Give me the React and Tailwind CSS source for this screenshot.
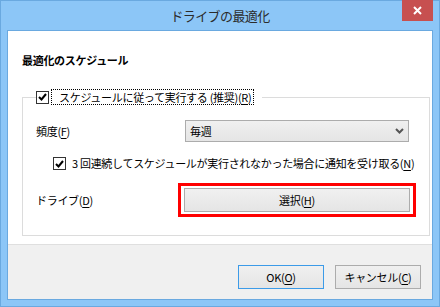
import React from 'react';

const font = "font-['Noto_Sans_CJK_JP','Noto_Sans',sans-serif]";

const CheckBox = () => (
  <span className="w-[13px] h-[13px] border border-[#333333] bg-white flex items-center justify-center shrink-0">
    <svg width="9" height="8" viewBox="0 0 9 8">
      <polyline points="1,4 3.5,6.5 8,1" fill="none" stroke="#000" strokeWidth="2" />
    </svg>
  </span>
);

const Key = ({ children }) => <span className="underline underline-offset-2">{children}</span>;

const App = () => (
  <div className={`w-[440px] h-[307px] bg-[#8CC6F7] border border-[#6AA9E0] flex flex-col ${font}`}>
    <div className="relative h-[29px] flex items-center justify-center text-[13px] tracking-[-0.6px] text-[#2b2b2b]">
      ドライブの最適化
      <div className="absolute right-[6px] top-[-1px] w-[31px] h-[21px] bg-[#C75050] flex items-center justify-center">
        <svg width="9" height="9" viewBox="0 0 9 9">
          <path d="M1 1 L8 8 M8 1 L1 8" stroke="#fff" strokeWidth="2" />
        </svg>
      </div>
    </div>

    <div className="mx-[6px] mb-[6px] flex-1 border border-[#6AA9E0] flex flex-col text-[11px] tracking-[-0.3px] text-black whitespace-nowrap">
      <div className="h-[214px] bg-white border-b border-[#DFDFDF] pl-[14px] pt-[21px]">
        <div className="h-[16px] leading-[16px] font-bold">最適化のスケジュール</div>

        <fieldset className="mt-[21px] w-[399px] border border-[#DCDCDC] px-[13px] pb-[18px]">
          <legend className="pr-[8px]">
            <div className="flex items-center gap-[2px] h-[16px]">
              <CheckBox />
              <span className="h-[16px] leading-[14px] border border-dotted border-black pl-[7px] pr-[2px]">
                スケジュールに従って実行する (推奨)(<Key>R</Key>)
              </span>
            </div>
          </legend>

          <div className="mt-[15px] flex items-center">
            <div className="w-[149px]">
              頻度(<Key>F</Key>)
            </div>
            <div className="w-[224px] h-[22px] border border-[#ACACAC] bg-gradient-to-b from-[#F0F0F0] to-[#E5E5E5] flex items-center justify-between pl-[4px] pr-[4px]">
              <span>毎週</span>
              <svg width="9" height="6" viewBox="0 0 9 6">
                <polyline points="1,1 4.5,4.5 8,1" fill="none" stroke="#555" strokeWidth="2" />
              </svg>
            </div>
          </div>

          <div className="mt-[13px] h-[17px] flex items-center pl-[17px] gap-[6px]">
            <CheckBox />
            <span>
              3&nbsp;回連続してスケジュールが実行されなかった場合に通知を受け取る(<Key>N</Key>)
            </span>
          </div>

          <div className="mt-[11px] flex items-center">
            <div className="w-[142px]">
              ドライブ(<Key>D</Key>)
            </div>
            <div className="border-[3px] border-[#FF0000] px-[3px] py-[2px]">
              <div className="w-[226px] h-[24px] border border-[#ACACAC] bg-gradient-to-b from-[#F0F0F0] to-[#E5E5E5] flex items-center justify-center">
                選択(<Key>H</Key>)
              </div>
            </div>
          </div>
        </fieldset>
      </div>

      <div className="flex-1 bg-[#F0F0F0] flex justify-end items-start pt-[20px] pr-[11px] gap-[11px]">
        <div className="w-[86px] h-[24px] border border-[#3C9BE8] bg-gradient-to-b from-[#F0F0F0] to-[#E5E5E5] flex items-center justify-center">
          OK(<Key>O</Key>)
        </div>
        <div className="w-[86px] h-[24px] border border-[#ACACAC] bg-gradient-to-b from-[#F0F0F0] to-[#E5E5E5] flex items-center justify-center">
          キャンセル(<Key>C</Key>)
        </div>
      </div>
    </div>
  </div>
);

export default App;
